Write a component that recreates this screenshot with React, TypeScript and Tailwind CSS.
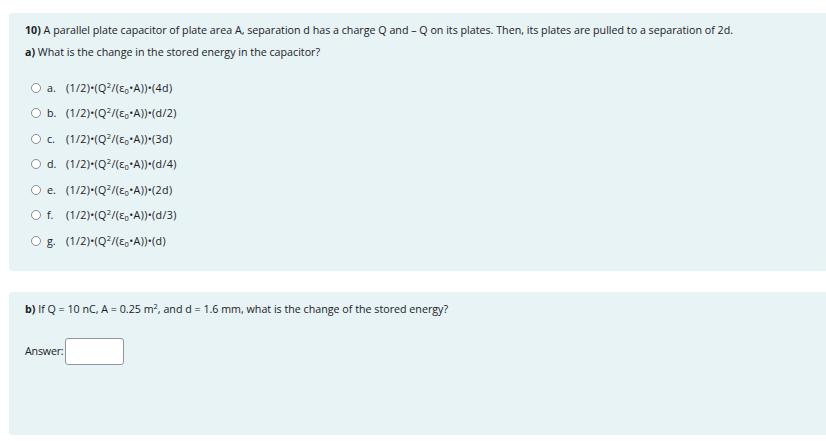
import React from "react";

const options = [
  { letter: "a.", tail: "(4d)" },
  { letter: "b.", tail: "(d/2)" },
  { letter: "c.", tail: "(3d)" },
  { letter: "d.", tail: "(d/4)" },
  { letter: "e.", tail: "(2d)" },
  { letter: "f.", tail: "(d/3)" },
  { letter: "g.", tail: "(d)" },
];

const Sup = ({ children }: { children: React.ReactNode }) => (
  <sup className="text-[7.5px] -top-[4px]">{children}</sup>
);

const Formula = ({ tail }: { tail: string }) => (
  <span className="tracking-[0.35px]">
    (1/2)•(Q<Sup>2</Sup>/(ε<sub className="text-[7.5px] top-[2px]">0</sub>•A))•{tail}
  </span>
);

const App = () => {
  return (
    <div
      className="w-[826px] h-[441px] bg-white overflow-hidden pt-[13px] text-[#1d2125] text-[10.7px]"
      style={{ fontFamily: '"Open Sans", "Noto Sans", sans-serif' }}
    >
      <div className="ml-[9px] bg-[#e7f3f5] rounded-l-[3px] h-[258px] pl-[16px] pt-[9px]">
        <p className="leading-[16px]">
          <span className="font-bold">10)</span> A parallel plate capacitor of plate area A, separation d has a charge Q and – Q on its plates. Then, its plates are pulled to a separation of 2d.
        </p>
        <p className="leading-[16px] mt-[6px]">
          <span className="font-bold">a)</span> What is the change in the stored energy in the capacitor?
        </p>
        <div className="mt-[15px] flex flex-col">
          {options.map((o) => (
            <div key={o.letter} className="flex items-center h-[25.5px] pl-[6px]">
              <span className="w-[10px] h-[10px] rounded-full border border-[#8a8d90] bg-white shrink-0" />
              <span className="ml-[6px] w-[19px]">{o.letter}</span>
              <Formula tail={o.tail} />
            </div>
          ))}
        </div>
      </div>
      <div className="ml-[9px] mt-[21px] bg-[#e7f3f5] rounded-l-[3px] h-[143px] pl-[16px] pt-[9px]">
        <p className="leading-[16px]">
          <span className="font-bold">b)</span> If Q = 10 nC, A = 0.25 m<Sup>2</Sup>, and d = 1.6 mm, what is the change of the stored energy?
        </p>
        <div className="flex items-center mt-[21px]">
          <span className="tracking-[-0.2px]">Answer:</span>
          <input className="ml-[2px] w-[59px] h-[27px] bg-white border border-[#8f959e] rounded-[3px]" />
        </div>
      </div>
    </div>
  );
};

export default App;
